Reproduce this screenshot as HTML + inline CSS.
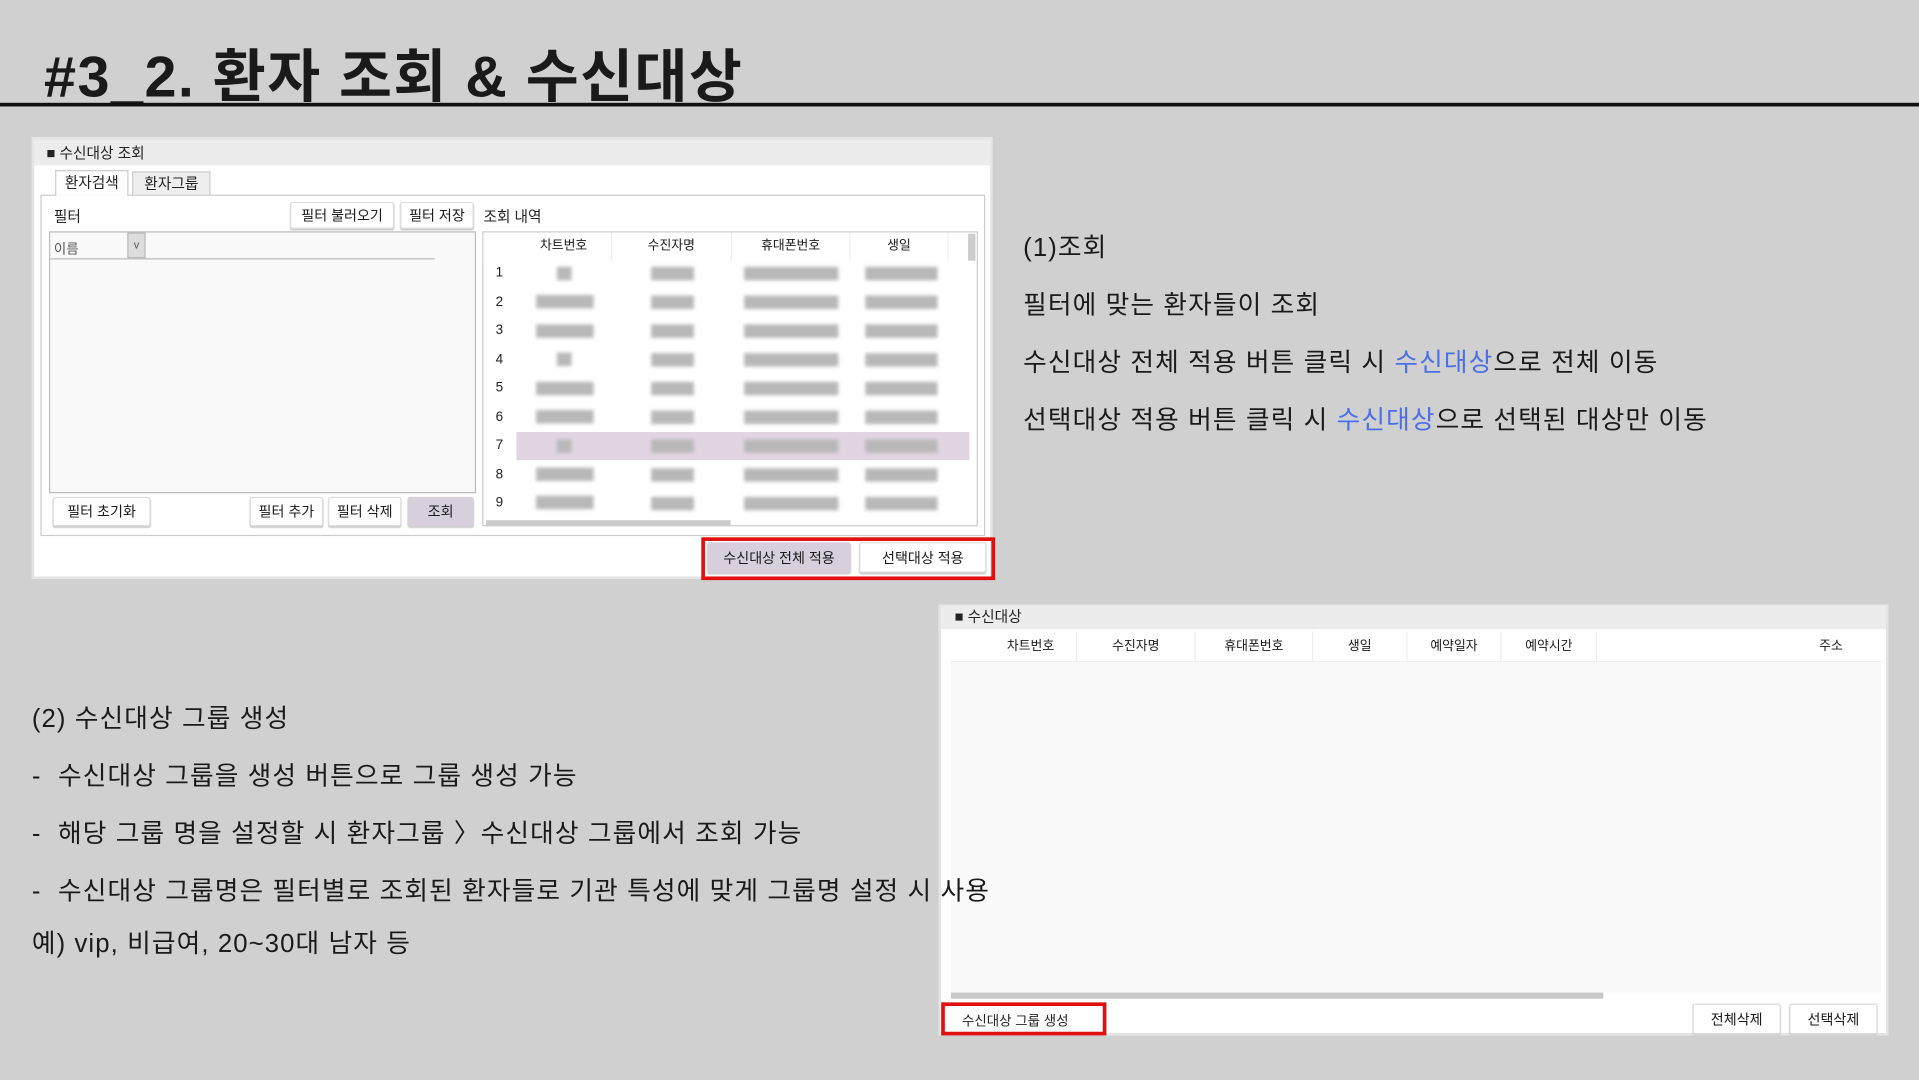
<!DOCTYPE html>
<html><head><meta charset="utf-8"><style>
*{margin:0;padding:0;box-sizing:border-box}
html,body{width:1919px;height:1080px;overflow:hidden;background:#d0d0d0}
#s{position:absolute;left:0;top:0;width:1568px;height:882px;transform:scale(1.2239);transform-origin:0 0;font-family:"Liberation Sans","Noto Sans CJK KR",sans-serif;color:#1a1a1a}
.a{position:absolute}
.t{font-size:21px;white-space:nowrap;letter-spacing:0.9px}
.ui{font-size:11px;color:#222;white-space:nowrap}
.btn{position:absolute;background:#fff;border:1px solid #ddd;border-radius:2px;font-size:11.5px;display:flex;align-items:center;justify-content:center;box-shadow:0 1px 1px #ccc}
.pur{background:#d8cfdd}
.blur{position:absolute;background:#b8b8b8;filter:blur(1.5px);height:11px}
.b{color:#4a6fe8}
.hd{position:absolute;font-size:10.5px;text-align:center;top:0;height:23px;line-height:23px;border-right:1px solid #eee}
</style></head><body><div id="s">
<div class="a" style="left:36px;top:24px;font-size:47px;font-weight:bold;white-space:nowrap;letter-spacing:1.2px">#3_2. 환자 조회 &amp; 수신대상</div>
<div class="a" style="left:0;top:84px;width:1568px;height:3px;background:#111"></div>

<!-- panel 1 -->
<div class="a" style="left:26px;top:112px;width:785px;height:361px;background:#fff;border:2px solid #e4e4e4"></div>
<div class="a" style="left:28px;top:114px;width:781px;height:21px;background:#ececec"></div>
<div class="a ui" style="left:38px;top:116px;font-size:12px">■ 수신대상 조회</div>
<div class="a" style="left:33px;top:159px;width:772px;height:279px;border:1px solid #ccc"></div>
<div class="a ui" style="left:45px;top:139px;width:60px;height:21px;background:#fff;border:1px solid #ccc;border-bottom:none;text-align:center;line-height:19px;font-size:12px">환자검색</div>
<div class="a ui" style="left:108px;top:140px;width:64px;height:19px;background:#eee;border:1px solid #ccc;border-bottom:none;text-align:center;line-height:18px;font-size:12px">환자그룹</div>
<div class="a ui" style="left:44px;top:168px;font-size:12px">필터</div>
<div class="btn" style="left:237px;top:165px;width:85px;height:22px">필터 불러오기</div>
<div class="btn" style="left:327px;top:165px;width:60px;height:22px">필터 저장</div>
<div class="a ui" style="left:395px;top:168px;font-size:12px">조회 내역</div>
<div class="a" style="left:40px;top:189px;width:349px;height:214px;border:1px solid #bbb;background:#f9f9f9"></div>
<div class="a ui" style="left:44px;top:195px;color:#555">이름</div>
<div class="a" style="left:104px;top:190px;width:15px;height:21px;background:#ddd;border:1px solid #bbb;font-size:9px;text-align:center;line-height:19px;color:#555">v</div>
<div class="a" style="left:41px;top:211px;width:314px;height:1px;background:#bbb"></div>
<div class="btn" style="left:43px;top:406px;width:80px;height:24px">필터 초기화</div>
<div class="btn" style="left:204px;top:406px;width:60px;height:24px">필터 추가</div>
<div class="btn" style="left:268px;top:406px;width:60px;height:24px">필터 삭제</div>
<div class="btn pur" style="left:333px;top:406px;width:54px;height:24px;border:none">조회</div>
<!-- grid -->
<div class="a" style="left:394px;top:189px;width:405px;height:241px;border:1px solid #ccc;background:#fff"></div>
<div class="a" style="left:395px;top:190px;width:403px;height:23px;background:#fff">
<div class="hd" style="left:27px;width:78px">차트번호</div>
<div class="hd" style="left:105px;width:98px">수진자명</div>
<div class="hd" style="left:203px;width:97px">휴대폰번호</div>
<div class="hd" style="left:300px;width:80px">생일</div>
</div>
<div class="a" style="left:791px;top:191px;width:6px;height:22px;background:#ccc"></div>
<div class="a" style="left:397px;top:425px;width:200px;height:5px;background:#ccc"></div>
<div class="a" style="left:422px;top:353px;width:370px;height:23px;background:#e2d5e2"></div>
<div class="a" style="left:780px;top:516px;width:0;height:0;border-left:12px solid transparent;border-bottom:12px solid #e4e4e4;margin-top:10px"></div>
<div class="a" style="left:573px;top:439px;width:240px;height:35px;border:3px solid #e01010"></div>
<div class="btn pur" style="left:578px;top:443px;width:117px;height:25px;border:none">수신대상 전체 적용</div>
<div class="btn" style="left:702px;top:443px;width:104px;height:25px">선택대상 적용</div>

<div class="a t" style="left:836px;top:186px">(1)조회</div>
<div class="a t" style="left:836px;top:233px">필터에 맞는 환자들이 조회</div>
<div class="a t" style="left:836px;top:280px">수신대상 전체 적용 버튼 클릭 시 <span class="b">수신대상</span>으로 전체 이동</div>
<div class="a t" style="left:836px;top:327px">선택대상 적용 버튼 클릭 시 <span class="b">수신대상</span>으로 선택된 대상만 이동</div>

<!-- panel 2 -->
<div class="a" style="left:767px;top:494px;width:776px;height:352px;background:#fff;border:2px solid #e4e4e4"></div>
<div class="a" style="left:769px;top:495px;width:772px;height:19px;background:#ececec"></div>
<div class="a ui" style="left:780px;top:495px;font-size:12px">■ 수신대상</div>
<div class="a" style="left:777px;top:541px;width:760px;height:270px;background:#f9f9f9"></div>
<div class="a" style="left:777px;top:516px;width:760px;height:25px;background:#fff;border-bottom:1px solid #eee">
<div class="hd" style="left:28px;width:75px;height:25px;line-height:25px">차트번호</div>
<div class="hd" style="left:103px;width:97px;height:25px;line-height:25px">수진자명</div>
<div class="hd" style="left:200px;width:96px;height:25px;line-height:25px">휴대폰번호</div>
<div class="hd" style="left:296px;width:77px;height:25px;line-height:25px">생일</div>
<div class="hd" style="left:373px;width:77px;height:25px;line-height:25px">예약일자</div>
<div class="hd" style="left:450px;width:78px;height:25px;line-height:25px">예약시간</div>
<div class="hd" style="left:690px;width:58px;height:25px;line-height:25px;border:none">주소</div>
</div>
<div class="a" style="left:777px;top:811px;width:533px;height:5px;background:#c8c8c8"></div>
<div class="a" style="left:769px;top:819px;width:135px;height:27px;border:3px solid #e01010"></div>
<div class="a ui" style="left:786px;top:826px">수신대상 그룹 생성</div>
<div class="btn" style="left:1383px;top:820px;width:72px;height:25px">전체삭제</div>
<div class="btn" style="left:1462px;top:820px;width:72px;height:25px">선택삭제</div>

<div class="a t" style="left:26px;top:571px">(2) 수신대상 그룹 생성</div>
<div class="a t" style="left:26px;top:618px">-&nbsp; 수신대상 그룹을 생성 버튼으로 그룹 생성 가능</div>
<div class="a t" style="left:26px;top:665px">-&nbsp; 해당 그룹 명을 설정할 시 환자그룹 〉수신대상 그룹에서 조회 가능</div>
<div class="a t" style="left:26px;top:712px">-&nbsp; 수신대상 그룹명은 필터별로 조회된 환자들로 기관 특성에 맞게 그룹명 설정 시 사용</div>
<div class="a t" style="left:26px;top:755px">예) vip, 비급여, 20~30대 남자 등</div>

<!-- rows -->
<div class="a ui" style="left:405px;top:212px;line-height:23.5px;font-size:11px">1<br>2<br>3<br>4<br>5<br>6<br>7<br>8<br>9</div>
<div class="blur" style="left:455px;top:218px;width:12px"></div>
<div class="blur" style="left:438px;top:241px;width:47px"></div>
<div class="blur" style="left:438px;top:265px;width:47px"></div>
<div class="blur" style="left:455px;top:288px;width:12px"></div>
<div class="blur" style="left:438px;top:312px;width:47px"></div>
<div class="blur" style="left:438px;top:335px;width:47px"></div>
<div class="blur" style="left:455px;top:359px;width:12px"></div>
<div class="blur" style="left:438px;top:382px;width:47px"></div>
<div class="blur" style="left:438px;top:405px;width:47px"></div>
<div class="blur" style="left:532px;top:218px;width:35px;box-shadow:0 23.5px 0 #b8b8b8,0 47px 0 #b8b8b8,0 70.5px 0 #b8b8b8,0 94px 0 #b8b8b8,0 117.5px 0 #b8b8b8,0 141px 0 #b8b8b8,0 164.5px 0 #b8b8b8,0 188px 0 #b8b8b8"></div>
<div class="blur" style="left:608px;top:218px;width:77px;box-shadow:0 23.5px 0 #b8b8b8,0 47px 0 #b8b8b8,0 70.5px 0 #b8b8b8,0 94px 0 #b8b8b8,0 117.5px 0 #b8b8b8,0 141px 0 #b8b8b8,0 164.5px 0 #b8b8b8,0 188px 0 #b8b8b8"></div>
<div class="blur" style="left:707px;top:218px;width:59px;box-shadow:0 23.5px 0 #b8b8b8,0 47px 0 #b8b8b8,0 70.5px 0 #b8b8b8,0 94px 0 #b8b8b8,0 117.5px 0 #b8b8b8,0 141px 0 #b8b8b8,0 164.5px 0 #b8b8b8,0 188px 0 #b8b8b8"></div>
</div></body></html>
